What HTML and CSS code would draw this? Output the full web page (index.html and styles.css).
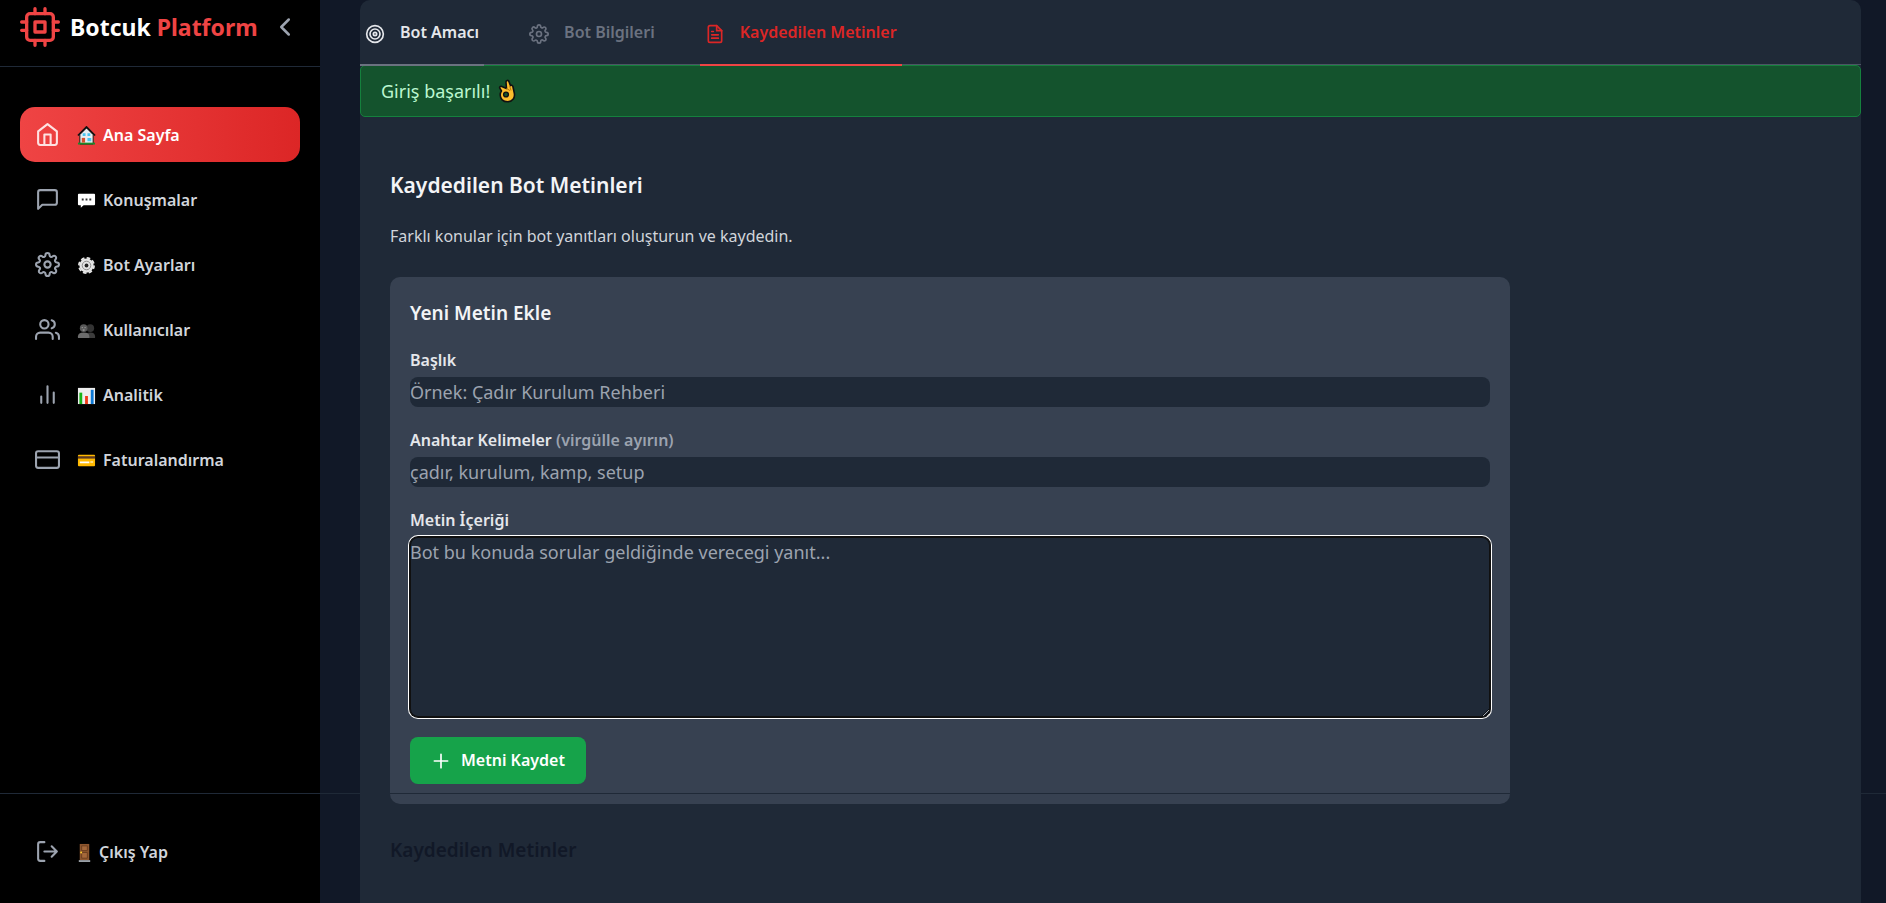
FILE: index.html
```html
<!DOCTYPE html>
<html lang="tr">
<head>
<meta charset="utf-8">
<title>Botcuk Platform</title>
<link rel="stylesheet" href="styles.css">
</head>
<body>
<div class="app">
  <aside class="sidebar">
    <header class="brand">
      <svg class="icon brand-logo" viewBox="0 0 24 24"><rect x="4" y="4" width="16" height="16" rx="2"/><rect x="9" y="9" width="6" height="6"/><path d="M9 1v3M15 1v3M9 20v3M15 20v3M20 9h3M20 14h3M1 9h3M1 14h3"/></svg>
      <h1 class="brand-name">Botcuk <span class="brand-accent">Platform</span></h1>
      <button class="collapse" type="button" aria-label="Menüyü daralt"><svg class="icon icon-chevron" viewBox="0 0 24 24"><path d="M15 18l-6-6 6-6"/></svg></button>
    </header>
    <nav class="menu">
      <a class="menu-item menu-item-active" href="#">
        <svg class="icon" viewBox="0 0 24 24"><path d="M3 9l9-7 9 7v11a2 2 0 0 1-2 2H5a2 2 0 0 1-2-2z"/><path d="M9 22V12h6v10"/></svg>
        <svg class="emoji" viewBox="0 0 20 20"><path d="M3 9v10h14V9l-7-7z" fill="#e8eef2" stroke="#111" stroke-width="1"/><path d="M1 10l9-9 9 9" fill="none" stroke="#111" stroke-width="1.8"/><path d="M1 17.500h18V19.500H1z" fill="#1b8a2b"/><path d="M5 12.500h3.500v5H5z" fill="#d8502f"/><path d="M11 12.500h4v3.500h-4zM6 7.500h3v3H6zM11 7.500h3v3h-3z" fill="#4cc4ee"/></svg>
        <span class="menu-text">Ana Sayfa</span>
      </a>
      <a class="menu-item" href="#">
        <svg class="icon" viewBox="0 0 24 24"><path d="M21 15a2 2 0 0 1-2 2H7l-4 4V5a2 2 0 0 1 2-2h14a2 2 0 0 1 2 2z"/></svg>
        <svg class="emoji" viewBox="0 0 20 20"><path d="M2 3h16q1 0 1 1v10q0 1-1 1H7l-3 2.500V15H2q-1 0-1-1V4q0-1 1-1z" fill="#fff"/><path d="M5 8h2v2H5zM9 8h2v2H9zM13 8h2v2h-2z" fill="#333"/></svg>
        <span class="menu-text">Konuşmalar</span>
      </a>
      <a class="menu-item" href="#">
        <svg class="icon" viewBox="0 0 24 24"><use href="#gear"/></svg>
        <svg class="emoji" viewBox="0 0 20 20"><circle cx="10" cy="10" r="7.500" fill="#e4e4e4"/><circle cx="10" cy="10" r="8" fill="none" stroke="#e4e4e4" stroke-width="1.800" stroke-dasharray="3.800 2.480"/><circle cx="10" cy="10" r="4.500" fill="none" stroke="#888" stroke-width="1"/><circle cx="10" cy="10" r="2" fill="#222"/></svg>
        <span class="menu-text">Bot Ayarları</span>
      </a>
      <a class="menu-item" href="#">
        <svg class="icon" viewBox="0 0 24 24"><path d="M17 21v-2a4 4 0 0 0-4-4H5a4 4 0 0 0-4 4v2"/><circle cx="9" cy="7" r="4"/><path d="M23 21v-2a4 4 0 0 0-3-3.870M16 3.130a4 4 0 0 1 0 7.750"/></svg>
        <svg class="emoji" viewBox="0 0 20 20"><circle cx="14" cy="7.500" r="4" fill="#343434"/><path d="M9 18v-2q0-4 5-4t5 4v2z" fill="#3c3c3c"/><circle cx="7" cy="7.500" r="4" fill="#5a5a5a"/><path d="M1 18v-2q0-4 6-4t6 4v2z" fill="#6c6c6c"/><path d="M5 7h1M8 7h1M6 9.500h2" stroke="#bbb"/></svg>
        <span class="menu-text">Kullanıcılar</span>
      </a>
      <a class="menu-item" href="#">
        <svg class="icon" viewBox="0 0 24 24"><path d="M18 20V10M12 20V4M6 20v-6"/></svg>
        <svg class="emoji" viewBox="0 0 20 20"><path d="M1 2h18v17H1z" fill="#eee"/><path d="M2.500 7H5.500v12h-3z" fill="#16b316"/><path d="M8.500 10.500h3V19h-3z" fill="#f03a17"/><path d="M14.500 4h3v15h-3z" fill="#0d78d4"/></svg>
        <span class="menu-text">Analitik</span>
      </a>
      <a class="menu-item" href="#">
        <svg class="icon" viewBox="0 0 24 24"><rect x="1" y="4" width="22" height="16" rx="2"/><path d="M1 10h22"/></svg>
        <svg class="emoji" viewBox="0 0 20 20"><rect x="1" y="4" width="18" height="12" rx="1" fill="#ffb900"/><path d="M1 5.500h18v2.500H1z" fill="#5c3a22"/><path d="M3 11h10v2H3zM14 11h3v1h-3z" fill="#fff"/></svg>
        <span class="menu-text">Faturalandırma</span>
      </a>
    </nav>
  </aside>

  <main class="main">
    <section class="panel">
      <div class="tabs" role="tablist">
        <button class="tab tab-first" type="button" role="tab"><svg class="icon icon-small" viewBox="0 0 24 24"><circle cx="12" cy="12" r="10"/><circle cx="12" cy="12" r="6"/><circle cx="12" cy="12" r="2"/></svg><span>Bot Amacı</span></button>
        <button class="tab" type="button" role="tab"><svg class="icon icon-small" viewBox="0 0 24 24"><g id="gear"><circle cx="12" cy="12" r="3"/><path d="M19.400 15a1.650 1.650 0 0 0 .33 1.820l.06.06a2 2 0 1 1-2.830 2.830l-.06-.06a1.650 1.650 0 0 0-1.820-.33 1.650 1.650 0 0 0-1 1.510V21a2 2 0 0 1-4 0v-.09A1.650 1.650 0 0 0 9 19.400a1.650 1.650 0 0 0-1.820.33l-.06.06a2 2 0 1 1-2.830-2.830l.06-.06a1.650 1.650 0 0 0 .33-1.820 1.650 1.650 0 0 0-1.510-1H3a2 2 0 0 1 0-4h.09A1.650 1.650 0 0 0 4.600 9a1.650 1.650 0 0 0-.33-1.820l-.06-.06a2 2 0 1 1 2.830-2.830l.06.06a1.650 1.650 0 0 0 1.820.33H9a1.650 1.650 0 0 0 1-1.510V3a2 2 0 0 1 4 0v.09a1.650 1.650 0 0 0 1 1.510 1.650 1.650 0 0 0 1.820-.33l.06-.06a2 2 0 1 1 2.830 2.830l-.06.06a1.650 1.650 0 0 0-.33 1.820V9a1.650 1.650 0 0 0 1.510 1H21a2 2 0 0 1 0 4h-.09a1.650 1.650 0 0 0-1.510 1z"/></g></svg><span>Bot Bilgileri</span></button>
        <button class="tab tab-active" type="button" role="tab" aria-selected="true"><svg class="icon icon-small" viewBox="0 0 24 24"><path d="M14 2H6a2 2 0 0 0-2 2v16a2 2 0 0 0 2 2h12a2 2 0 0 0 2-2V8z"/><path d="M14 2v6h6M16 13H8M16 17H8M10 9H8"/></svg><span>Kaydedilen Metinler</span></button>
      </div>
      <div class="alert" role="status">
        <span>Giriş başarılı!</span>
        <svg class="emoji-hand" viewBox="0 0 18 24"><path d="M9.500 22.800C5 22.800 2.200 19.800 2.200 16c0-1.600.5-3 1.300-4L1.800 9.200C1.200 7.800 2.500 6.800 3.800 7.500L8.500 9.500 8 3.500C7.800 1.300 10.200.6 11 2.600l1.500 4C13.500 5.600 14.800 6.500 15 8l1.300 6c1 5-2 8.800-6.800 8.800z" fill="#fdbd2d" stroke="#111" stroke-width="1.600" stroke-linejoin="round"/><path d="M8.500 9.500l3.500 2M11.500 6.500l1.500 5" fill="none" stroke="#b9770e" stroke-width="1"/><circle cx="8" cy="15.500" r="2.400" fill="#14532d" stroke="#111" stroke-width="1.400"/></svg>
      </div>
      <div class="content">
        <h2 class="title">Kaydedilen Bot Metinleri</h2>
        <p class="lead">Farklı konular için bot yanıtları oluşturun ve kaydedin.</p>
        <form class="card">
          <h3 class="card-title">Yeni Metin Ekle</h3>
          <div class="field">
            <label class="label" for="baslik">Başlık</label>
            <input class="control" id="baslik" type="text" placeholder="Örnek: Çadır Kurulum Rehberi">
          </div>
          <div class="field">
            <label class="label" for="anahtar">Anahtar Kelimeler <span class="hint">(virgülle ayırın)</span></label>
            <input class="control" id="anahtar" type="text" placeholder="çadır, kurulum, kamp, setup">
          </div>
          <div class="field">
            <label class="label" for="icerik">Metin İçeriği</label>
            <textarea class="control control-focused" id="icerik" rows="6" placeholder="Bot bu konuda sorular geldiğinde verecegi yanıt..."></textarea>
          </div>
          <button class="save" type="button"><svg class="icon icon-small icon-plus" viewBox="0 0 24 24"><path d="M12 4v16M4 12h16"/></svg><span>Metni Kaydet</span></button>
        </form>
        <h3 class="list-title">Kaydedilen Metinler</h3>
      </div>
    </section>
  </main>

  <footer class="bottom">
    <a class="menu-item" href="#">
      <svg class="icon" viewBox="0 0 24 24"><path d="M9 21H5a2 2 0 0 1-2-2V5a2 2 0 0 1 2-2h4M16 17l5-5-5-5M21 12H9"/></svg>
      <svg class="emoji emoji-door" viewBox="0 0 14 20"><path d="M2 1h10v17H2z" fill="#8e562e"/><path d="M4 3h6v5H4zM4 10h6v6H4z" fill="#a5683a" stroke="#6d3f20"/><path d="M1 18h12v2H1z" fill="#9aa0a6"/><circle cx="3.500" cy="10" r="1" fill="#ffd02f"/></svg>
      <span class="menu-text">Çıkış Yap</span>
    </a>
  </footer>
</div>
</body>
</html>
```

FILE: styles.css
```css
* {
  box-sizing: border-box;
}

body {
  margin: 0;
  background: #111827;
  color: #e5e7eb;
  font-family: "Noto Sans", "Open Sans", sans-serif;
  font-size: 16px;
  line-height: 25px;
}

h1, h2, h3, p {
  margin: 0;
}

button, input, textarea {
  font: inherit;
}

button {
  border: 0;
  background: none;
  cursor: pointer;
}

.app {
  position: relative;
  display: flex;
  height: 100vh;
  overflow: hidden;
}

.icon {
  flex: none;
  width: 25px;
  height: 25px;
  fill: none;
  stroke: currentColor;
  stroke-width: 2;
  stroke-linecap: round;
  stroke-linejoin: round;
}

.icon-small {
  width: 20px;
  height: 20px;
}

.icon-chevron {
  display: block;
  width: 30px;
  height: 30px;
}

/* Sidebar */
.sidebar {
  flex: none;
  width: 320px;
  background: #000;
}

.brand {
  display: flex;
  align-items: center;
  height: 67px;
  padding: 0 20px 13px;
  border-bottom: 1px solid #1f2937;
}

.brand-logo {
  width: 40px;
  height: 40px;
  color: #ef4444;
}

.brand-name {
  flex: 1;
  margin-left: 10px;
  padding-top: 2px;
  color: #fff;
  font-size: 23px;
  font-weight: 700;
  line-height: 35px;
  white-space: nowrap;
}

.brand-accent {
  color: #ef4444;
}

.collapse {
  padding: 0;
  color: #9ca3af;
}

.menu {
  display: flex;
  flex-direction: column;
  gap: 10px;
  padding: 40px 20px;
}

.menu-item {
  display: flex;
  align-items: center;
  height: 55px;
  padding: 0 15px;
  border-radius: 15px;
  color: #d1d5db;
  font-weight: 600;
  text-decoration: none;
}

.menu-item .icon {
  margin-right: 17px;
  color: #9ca3af;
}

.menu-text {
  padding-top: 2px;
}

.menu-item-active {
  background: linear-gradient(to right, #ef4444, #dc2626);
  color: #fff;
}

.menu-item-active .icon {
  color: #fee2e2;
}

.emoji {
  flex: none;
  width: 19px;
  height: 19px;
  margin: 2px 7px 0 0;
}

.emoji-door {
  width: 15px;
}

.bottom {
  position: absolute;
  right: 0;
  bottom: 0;
  left: 0;
  padding: 30px 20px 24px;
  border-top: 1px solid #1f2937;
}

/* Main panel */
.main {
  flex: 1;
  min-width: 0;
  padding: 0 25px 0 40px;
}

.panel {
  min-height: 100%;
  border-radius: 10px 10px 0 0;
  background: #1f2937;
}

.tabs {
  display: flex;
  gap: 40px;
  height: 65px;
  border-bottom: 1px solid #4b5563;
}

.tab {
  position: relative;
  z-index: 1;
  display: flex;
  gap: 15px;
  height: 66px;
  padding: 20px 5px 0;
  border-bottom: 2px solid transparent;
  color: #6b7280;
  font-weight: 600;
}

.tab .icon {
  margin-top: 4px;
}

.tab-first {
  border-color: #6b7280;
  color: #e5e7eb;
}

.tab-active {
  border-color: #ef4444;
  color: #dc2626;
}

.alert {
  display: flex;
  align-items: center;
  gap: 8px;
  height: 52px;
  padding: 0 20px;
  border: 1px solid #15803d;
  border-radius: 5px;
  background: #14532d;
  color: #bbf7d0;
  font-size: 18px;
}

.emoji-hand {
  width: 18px;
  height: 24px;
}

.content {
  padding: 51px 30px 0;
}

.title {
  color: #f3f4f6;
  font-size: 21px;
  font-weight: 600;
  line-height: 35px;
}

.lead {
  margin-top: 18px;
  color: #d1d5db;
  line-height: 30px;
}

.card {
  max-width: 1120px;
  margin-top: 26px;
  padding: 20px;
  border-radius: 10px;
  background: #374151;
}

.card-title {
  margin-bottom: 20px;
  padding-top: 1px;
  color: #f3f4f6;
  font-size: 19px;
  font-weight: 600;
  line-height: 30px;
}

.field {
  display: flex;
  flex-direction: column;
  margin-bottom: 20px;
}

.label {
  margin-bottom: 4px;
  color: #e5e7eb;
  font-weight: 600;
}

.hint {
  color: #9ca3af;
}

.control {
  width: 100%;
  padding: 0;
  border: 0;
  border-radius: 8px;
  background: #1f2937;
  color: #f3f4f6;
  font-size: 18px;
  line-height: 30px;
}

input.control {
  height: 30px;
  margin-bottom: 1px;
}

.control::placeholder {
  color: #9ca3af;
  opacity: 1;
}

.control-focused {
  display: block;
  resize: vertical;
  box-shadow: 0 0 0 1px #101010, 0 0 0 2px #fff, inset 0 0 0 1px #101010;
}

.save {
  display: flex;
  align-items: center;
  gap: 10px;
  height: 47px;
  padding: 0 21px;
  border-radius: 8px;
  background: #16a34a;
  color: #fff;
  font-weight: 600;
}

.list-title {
  margin-top: 31px;
  color: #111827;
  font-size: 19px;
  font-weight: 600;
  line-height: 30px;
}
```
